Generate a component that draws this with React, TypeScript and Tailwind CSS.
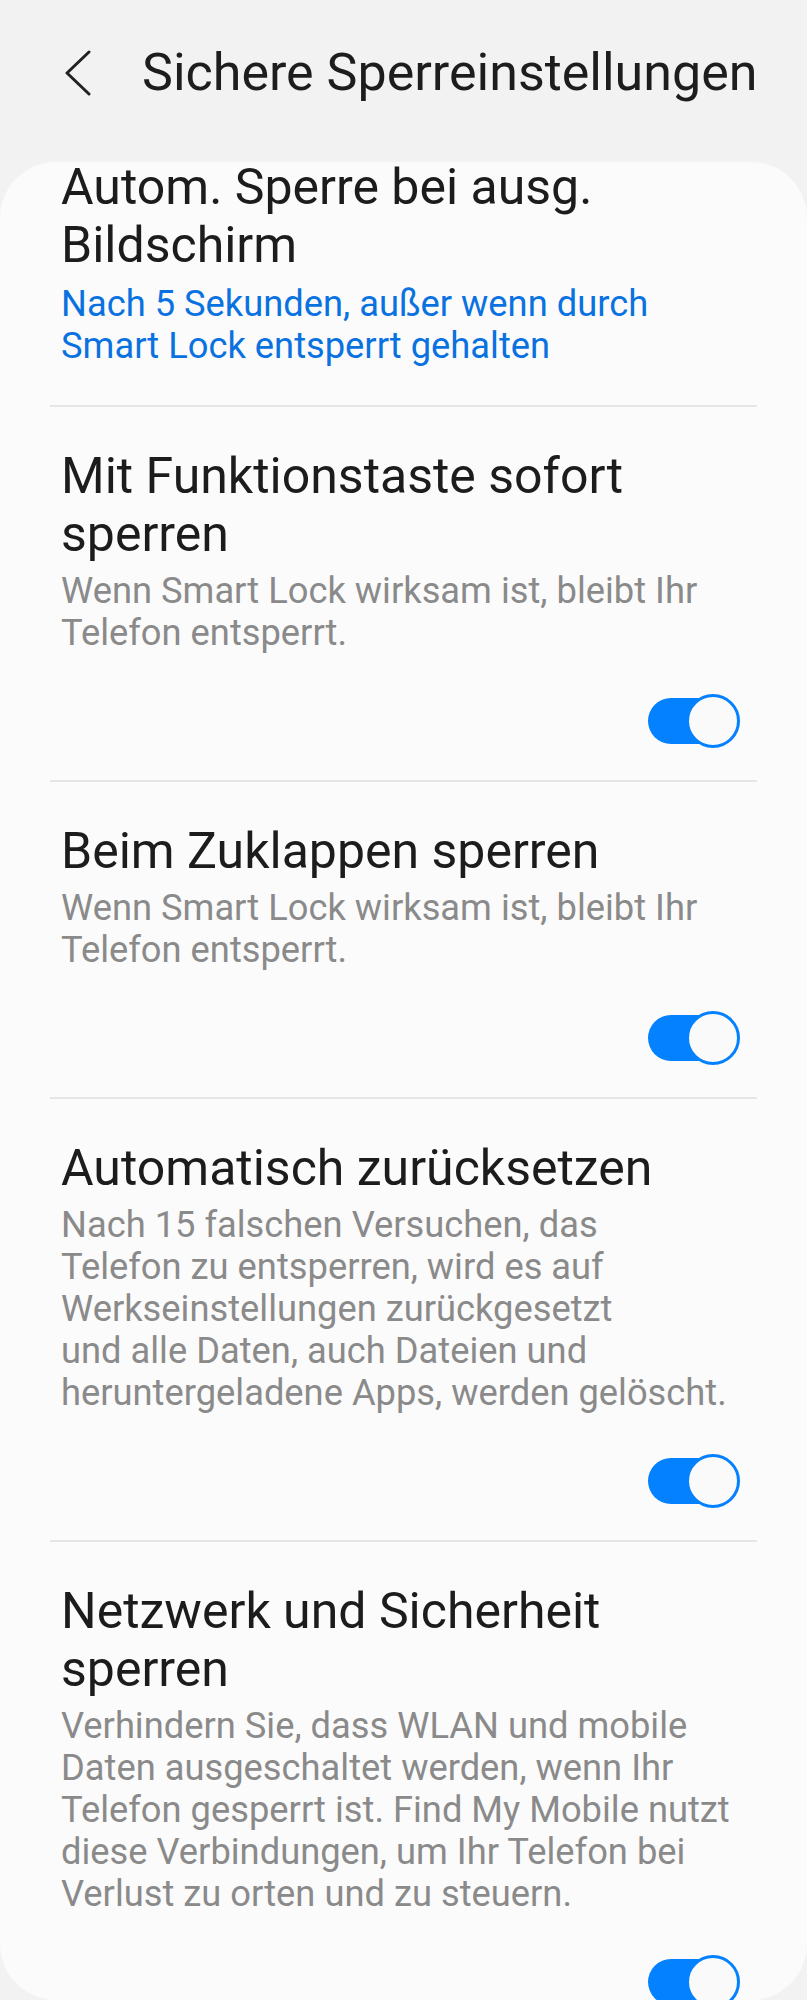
import React from "react";

type Item = {
  title: string[];
  summary: string[];
  blue?: boolean;
  toggle?: boolean;
};

const items: Item[] = [
  {
    title: ["Autom. Sperre bei ausg.", "Bildschirm"],
    summary: ["Nach 5 Sekunden, außer wenn durch", "Smart Lock entsperrt gehalten"],
    blue: true,
  },
  {
    title: ["Mit Funktionstaste sofort", "sperren"],
    summary: ["Wenn Smart Lock wirksam ist, bleibt Ihr", "Telefon entsperrt."],
    toggle: true,
  },
  {
    title: ["Beim Zuklappen sperren"],
    summary: ["Wenn Smart Lock wirksam ist, bleibt Ihr", "Telefon entsperrt."],
    toggle: true,
  },
  {
    title: ["Automatisch zurücksetzen"],
    summary: [
      "Nach 15 falschen Versuchen, das",
      "Telefon zu entsperren, wird es auf",
      "Werkseinstellungen zurückgesetzt",
      "und alle Daten, auch Dateien und",
      "heruntergeladene Apps, werden gelöscht.",
    ],
    toggle: true,
  },
  {
    title: ["Netzwerk und Sicherheit", "sperren"],
    summary: [
      "Verhindern Sie, dass WLAN und mobile",
      "Daten ausgeschaltet werden, wenn Ihr",
      "Telefon gesperrt ist. Find My Mobile nutzt",
      "diese Verbindungen, um Ihr Telefon bei",
      "Verlust zu orten und zu steuern.",
    ],
    toggle: true,
  },
];

export default function App() {
  return (
    <div className="min-h-[2000px] bg-[#f2f2f2] font-[Roboto,sans-serif]">
      {/* app bar */}
      <div className="flex h-[146px] items-center pl-[64px]">
        <svg width="28" height="46" viewBox="0 0 28 46" fill="none">
          <polyline
            points="25,2 3,23 25,44"
            stroke="#222222"
            strokeWidth="3"
            strokeLinecap="round"
            strokeLinejoin="round"
          />
        </svg>
        <span className="ml-[50px] whitespace-nowrap text-[52px] leading-[60px] text-[#1d1d1d]">
          Sichere Sperreinstellungen
        </span>
      </div>

      <div className="mt-4 h-[1838px] overflow-hidden rounded-[56px] bg-[#fbfbfb]">
        <div className="-mt-[4px] flex flex-col px-[50px]">
          {items.map((item, i) => (
            <SettingRow key={i} item={item} first={i === 0} last={i === items.length - 1} />
          ))}
        </div>
      </div>
    </div>
  );
}

const SettingRow = ({ item, first, last }: { item: Item; first: boolean; last: boolean }) => {
  return (
    <div className={first ? "" : "border-t-2 border-[#e6e6e6]"}>
      <div className={`px-[11px] ${first ? "pb-[38px]" : "pt-[40px] pb-[32px]"} ${last ? "pb-0" : ""}`}>
        <div className="text-[50px] leading-[58px] text-[#1c1c1c]">
          {item.title.map((t) => (
            <div key={t} className="whitespace-nowrap">
              {t}
            </div>
          ))}
        </div>
        <div
          className={`${item.blue ? "mt-[9px] text-[#0a72e0]" : "mt-[7px] text-[#8a8a8a]"} text-[36.3px] leading-[42px]`}
        >
          {item.summary.map((t) => (
            <div key={t} className="whitespace-nowrap">
              {t}
            </div>
          ))}
        </div>
        {item.toggle && (
          <div className="mt-[40px] flex justify-end pr-[6px]">
            <Toggle />
          </div>
        )}
      </div>
    </div>
  );
};

const Toggle = () => (
  <div className="relative h-[54px] w-[92px]">
    <div className="absolute left-0 top-[4px] h-[46px] w-[80px] rounded-full bg-[#0381fe]" />
    <div className="absolute right-0 top-0 h-[54px] w-[54px] rounded-full border-[3px] border-[#0381fe] bg-[#fafafa]" />
  </div>
);
